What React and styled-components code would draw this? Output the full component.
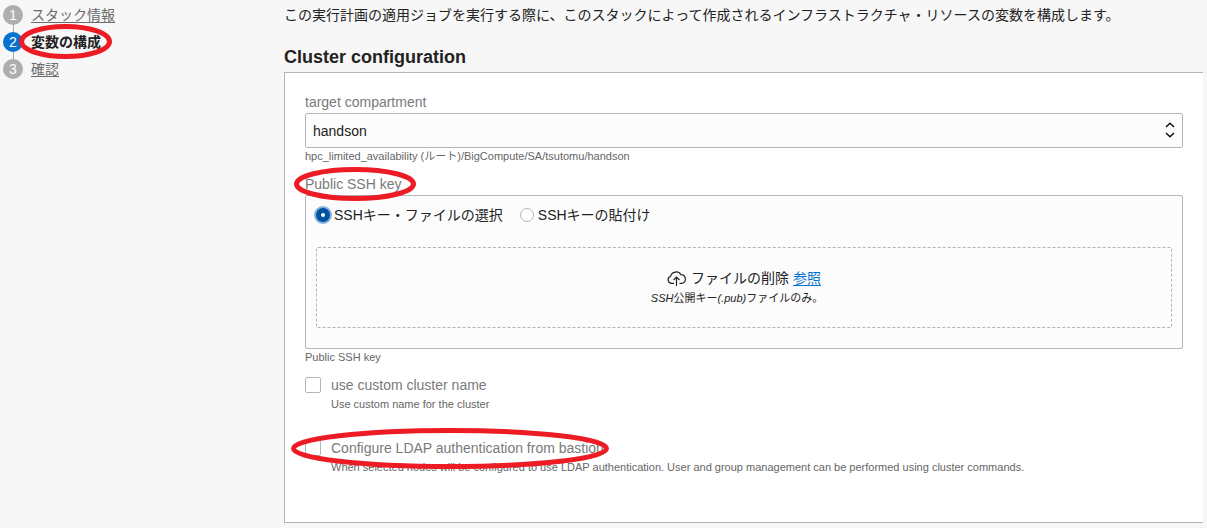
import React from "react";
import styled, { createGlobalStyle } from "styled-components";

const GlobalStyle = createGlobalStyle`
  *, *::before, *::after { box-sizing: border-box; }
  body {
    margin: 0;
    background: #f7f7f7;
    color: #222;
    font: 14px/20px "Liberation Sans", "Noto Sans CJK JP", sans-serif;
  }
`;

const Page = styled.div`
  display: flex;
  padding: 5px 4px 5px 3px;
`;

const Sidebar = styled.nav`
  flex: 0 0 281px;
`;

const Steps = styled.ol`
  display: flex;
  flex-direction: column;
  gap: 7px;
  margin: 0;
  padding: 0;
  list-style: none;
`;

const Step = styled.li`
  position: relative;
  display: flex;
  gap: 8px;
  height: 20px;

  &:not(:last-child)::after {
    content: "";
    position: absolute;
    top: 20px;
    left: 10px;
    width: 1px;
    height: 7px;
    background: #aaa;
  }
`;

const StepNumber = styled.span`
  width: 20px;
  height: 20px;
  border-radius: 50%;
  background: ${(p) => (p.$current ? "#0572ce" : "#aeaeae")};
  color: #fff;
  text-align: center;
`;

const StepLink = styled.a`
  color: #6b6b6b;
  text-underline-offset: 2px;
`;

const StepCurrent = styled.strong`
  position: relative;
  color: #222;
`;

const Main = styled.main`
  flex: 1;
  min-width: 0;
`;

const Intro = styled.p`
  margin: 0 0 22px;
`;

const Heading = styled.h2`
  margin: 0 0 5px;
  font-size: 18px;
  line-height: 20px;
`;

const Panel = styled.form`
  padding: 19px 20px 47px;
  border: 1px solid #aeb6be;
  border-right: 0;
  background: #fff;
`;

const Field = styled.div`
  display: flex;
  flex-direction: column;
  align-items: flex-start;
  margin-bottom: 10px;
`;

const Label = styled.label`
  position: relative;
  margin-bottom: 1px;
  color: #7a7a7a;
`;

const Help = styled.div`
  color: #666;
  font-size: 11px;
  line-height: 16px;
`;

const SelectWrap = styled.div`
  position: relative;
  width: 100%;
  height: 35px;

  svg {
    position: absolute;
    top: 9px;
    right: 8px;
    pointer-events: none;
  }
`;

const Select = styled.select`
  appearance: none;
  display: block;
  width: 100%;
  height: 100%;
  padding: 0 28px 0 7px;
  border: 1px solid #aeb6be;
  border-radius: 2px;
  background: #fcfcfc;
  color: #222;
  font: inherit;
`;

const KeyBox = styled.div`
  width: 100%;
  padding: 9px 10px 20px;
  border: 1px solid #aeb6be;
  border-radius: 2px;
  background: #fcfcfc;
`;

const RadioRow = styled.div`
  display: flex;
  gap: 17px;
  margin-bottom: 22px;
`;

const RadioLabel = styled.label`
  display: flex;
  align-items: center;
  gap: 4px;
`;

const Radio = styled.input`
  appearance: none;
  width: 14px;
  height: 14px;
  margin: 0;
  border: 1px solid #aeb6be;
  border-radius: 50%;
  background: #fff;

  &:checked {
    border: 5px solid #00539f;
    box-shadow: 0 0 0 2px #82b1e2;
  }
`;

const DropZone = styled.div`
  display: flex;
  justify-content: center;
  align-items: center;
  height: 81px;
  border: 1px dashed #b4b4b4;
  border-radius: 2px;
`;

const DropContent = styled.div`
  display: flex;
  flex-direction: column;
  align-items: center;
`;

const DropTitle = styled.div`
  display: flex;
  align-items: center;
  gap: 4px;
`;

const BrowseLink = styled.a`
  color: #0572ce;
  text-underline-offset: 2px;
`;

const DropHint = styled.div`
  padding-right: 14px;
  font-size: 11px;
`;

const CheckList = styled.div`
  display: flex;
  flex-direction: column;
  gap: 26px;
`;

const CheckRow = styled.div`
  display: flex;
  gap: 10px;
`;

const Checkbox = styled.input`
  appearance: none;
  flex: none;
  width: 16px;
  height: 16px;
  margin: 2px 0 0;
  border: 1px solid #aeb6be;
  border-radius: 2px;
  background: #fff;
`;

const CheckText = styled.div`
  display: flex;
  flex-direction: column;
  align-items: flex-start;
`;

const Ring = styled.svg`
  position: absolute;
  z-index: 1;
  top: ${(p) => p.$top}px;
  left: ${(p) => p.$left}px;
  pointer-events: none;
`;

function Highlight({ top, left, width, height }) {
  return (
    <Ring $top={top} $left={left} width={width} height={height} aria-hidden="true">
      <ellipse
        cx={width / 2}
        cy={height / 2}
        rx={width / 2 - 2.5}
        ry={height / 2 - 2.5}
        fill="none"
        stroke="#ed1c24"
        strokeWidth="5"
      />
    </Ring>
  );
}

function CloudUpload() {
  return (
    <svg width="20" height="16" viewBox="0 0 20 16" fill="none" stroke="#222" strokeWidth="1.2" aria-hidden="true">
      <path d="M7 13.3H4.2A3.600 3.600 0 0 1 3.600 6.300A5.600 5.300 0 0 1 14 4.700A4.400 4.400 0 0 1 15.300 13.300H12.500" />
      <path d="M9.500 16V7M6.500 10L9.500 7L12.500 10" />
    </svg>
  );
}

export default function App() {
  return (
    <>
      <GlobalStyle />
      <Page>
        <Sidebar>
          <Steps>
            <Step>
              <StepNumber>1</StepNumber>
              <StepLink href="#info">スタック情報</StepLink>
            </Step>
            <Step>
              <StepNumber $current>2</StepNumber>
              <StepCurrent aria-current="step">
                変数の構成
                <Highlight top={-8} left={-12} width={93} height={35} />
              </StepCurrent>
            </Step>
            <Step>
              <StepNumber>3</StepNumber>
              <StepLink href="#review">確認</StepLink>
            </Step>
          </Steps>
        </Sidebar>
        <Main>
          <Intro>
            この実行計画の適用ジョブを実行する際に、このスタックによって作成されるインフラストラクチャ・リソースの変数を構成します。
          </Intro>
          <Heading>Cluster configuration</Heading>
          <Panel>
            <Field>
              <Label htmlFor="compartment">target compartment</Label>
              <SelectWrap>
                <Select id="compartment" defaultValue="handson">
                  <option value="handson">handson</option>
                </Select>
                <svg width="10" height="16" viewBox="0 0 10 16" fill="none" stroke="#111" strokeWidth="1.5" aria-hidden="true">
                  <path d="M1 5L5 1.300L9 5M1 11L5 14.700L9 11" />
                </svg>
              </SelectWrap>
              <Help>hpc_limited_availability (ルート)/BigCompute/SA/tsutomu/handson</Help>
            </Field>
            <Field>
              <Label as="div" id="ssh-label">
                Public SSH key
                <Highlight top={-7} left={-11} width={122} height={34} />
              </Label>
              <KeyBox role="radiogroup" aria-labelledby="ssh-label">
                <RadioRow>
                  <RadioLabel>
                    <Radio type="radio" name="ssh" defaultChecked />
                    SSHキー・ファイルの選択
                  </RadioLabel>
                  <RadioLabel>
                    <Radio type="radio" name="ssh" />
                    SSHキーの貼付け
                  </RadioLabel>
                </RadioRow>
                <DropZone>
                  <DropContent>
                    <DropTitle>
                      <CloudUpload />
                      <span>ファイルの削除</span>
                      <BrowseLink href="#browse">参照</BrowseLink>
                    </DropTitle>
                    <DropHint>
                      <em>SSH</em>公開キー<em>(.pub)</em>ファイルのみ。
                    </DropHint>
                  </DropContent>
                </DropZone>
              </KeyBox>
              <Help>Public SSH key</Help>
            </Field>
            <CheckList>
              <CheckRow>
                <Checkbox type="checkbox" id="custom-name" />
                <CheckText>
                  <Label htmlFor="custom-name">use custom cluster name</Label>
                  <Help>Use custom name for the cluster</Help>
                </CheckText>
              </CheckRow>
              <CheckRow>
                <Checkbox type="checkbox" id="ldap" />
                <CheckText>
                  <Label htmlFor="ldap">
                    Configure LDAP authentication from bastion
                    <Highlight top={-10} left={-40} width={318} height={41} />
                  </Label>
                  <Help>
                    When selected nodes will be configured to use LDAP authentication. User and group management can be
                    performed using cluster commands.
                  </Help>
                </CheckText>
              </CheckRow>
            </CheckList>
          </Panel>
        </Main>
      </Page>
    </>
  );
}
